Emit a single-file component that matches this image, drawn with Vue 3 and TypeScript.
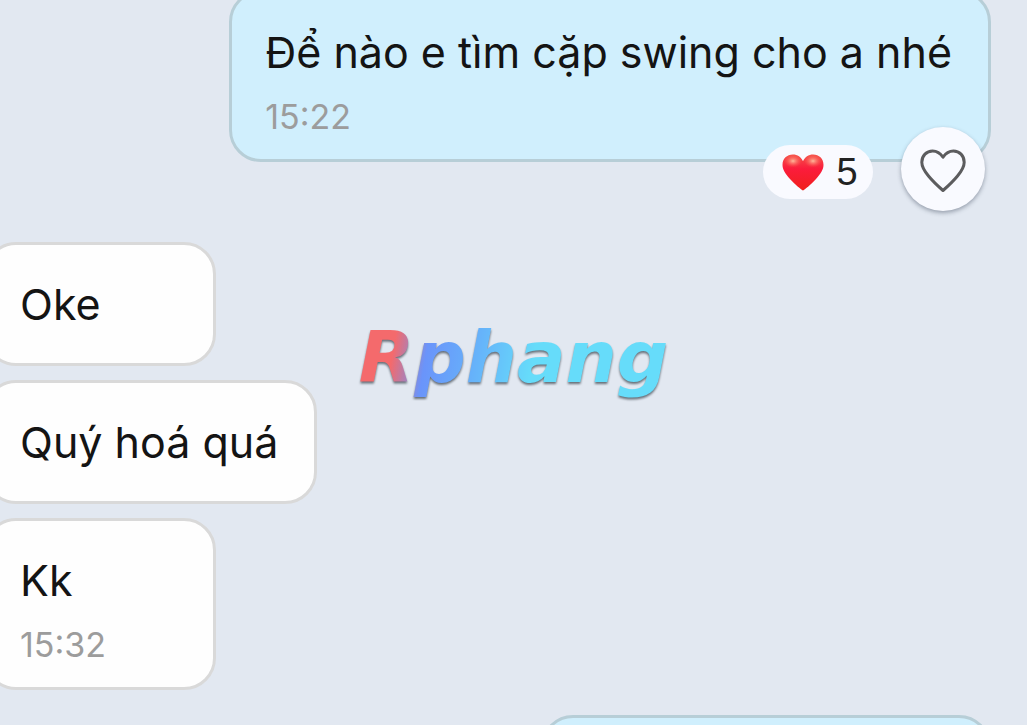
<script setup lang="ts">
import { ref } from 'vue'

interface Message {
  id: number
  text: string
  time?: string
}

const sent: Message = { id: 1, text: 'Để nào e tìm cặp swing cho a nhé', time: '15:22' }
const received: Message[] = [
  { id: 2, text: 'Oke' },
  { id: 3, text: 'Quý hoá quá' },
  { id: 4, text: 'Kk', time: '15:32' },
]
const reactions = ref(5)
</script>

<template>
  <main class="chat">
    <section class="group group-sent">
      <article class="bubble sent">
        <p class="text">{{ sent.text }}</p>
        <time class="time">{{ sent.time }}</time>
        <div class="actions">
          <div class="count">
            <svg class="heart" viewBox="0 0 42 37" aria-hidden="true">
              <defs>
                <linearGradient id="heartFill" x1="0" y1="0" x2="0" y2="1">
                  <stop offset="0" stop-color="#f4534a" />
                  <stop offset="0.4" stop-color="#fb1c3c" />
                  <stop offset="1" stop-color="#f0201c" />
                </linearGradient>
                <radialGradient id="heartShine">
                  <stop offset="0" stop-color="#ffc0a0" stop-opacity="0.95" />
                  <stop offset="1" stop-color="#ff5a50" stop-opacity="0" />
                </radialGradient>
              </defs>
              <path
                d="M21 36.500C19 35.500 13 30.500 8 25C3 19.500 .5 15.500 .5 10.800C.5 4.800 5 .6 10.800 .6C15.500 .6 19.200 3.200 21 7.200C22.800 3.200 26.500 .6 31.200 .6C37 .6 41.500 4.800 41.500 10.800C41.500 15.500 39 19.500 34 25C29 30.500 23 35.500 21 36.500Z"
                fill="url(#heartFill)"
              />
              <ellipse cx="11" cy="7" rx="9" ry="6.500" fill="url(#heartShine)" />
              <ellipse cx="31" cy="7" rx="9" ry="6.500" fill="url(#heartShine)" />
            </svg>
            <span>{{ reactions }}</span>
          </div>
          <button class="like" type="button" aria-label="Thả tim" @click="reactions++">
            <svg class="outline" viewBox="0 0 46 44" aria-hidden="true">
              <path
                d="M23 41.500C19 38 13 32.500 8.500 27C4.200 21.800 1.800 18 1.800 13.200C1.800 6.600 6.600 2 12.600 2C17 2 20.500 4.500 23 8.200C25.500 4.500 29 2 33.400 2C39.400 2 44.200 6.600 44.200 13.200C44.200 18 41.800 21.800 37.500 27C33 32.500 27 38 23 41.500Z"
                fill="none"
                stroke="#5c5c5e"
                stroke-width="3"
                stroke-linejoin="round"
              />
            </svg>
          </button>
        </div>
      </article>
    </section>

    <section class="group group-received">
      <article v-for="m in received" :key="m.id" class="bubble received">
        <p class="text">{{ m.text }}</p>
        <time v-if="m.time" class="time">{{ m.time }}</time>
      </article>
    </section>

    <section class="group group-sent">
      <article class="bubble sent next"></article>
    </section>

    <div class="watermark"><span class="brand">Rphang</span></div>
  </main>
</template>

<style>
body {
  margin: 0;
  background: #e2e8f1;
}
</style>

<style scoped>
.chat {
  position: relative;
  box-sizing: border-box;
  height: 100vh;
  overflow: hidden;
  display: flex;
  flex-direction: column;
  background: #e2e8f1;
  color: #141414;
  font-family: Inter, "Noto Sans", "Liberation Sans", sans-serif;
}

.group {
  display: flex;
  flex-direction: column;
  flex-shrink: 0;
  gap: 14px;
}

.group-sent {
  align-items: flex-end;
  margin-top: -10px;
  padding-right: 36px;
}

.group-received {
  align-items: flex-start;
  margin: 80px 0 0 -16px;
}

.group-received + .group-sent {
  margin-top: 25px;
}

.bubble {
  position: relative;
  box-sizing: border-box;
  min-width: 232px;
  padding: 32px 36px 32px 33px;
  border: 3px solid #d9d9d9;
  border-radius: 32px;
  background: #fefefe;
}

.bubble:has(.time) {
  padding-bottom: 22px;
}

.sent {
  border-color: #b7ced7;
  background: #d0effd;
}

.next {
  width: 450px;
  min-height: 124px;
}

.text {
  margin: 0;
  font-size: 43px;
  line-height: 54px;
  white-space: nowrap;
}

.time {
  display: block;
  margin-top: 18px;
  color: #9c9c9c;
  font-size: 34px;
  line-height: 40px;
}

.actions {
  position: absolute;
  right: 3px;
  bottom: -52px;
  display: flex;
  align-items: flex-end;
  gap: 28px;
}

.count {
  box-sizing: border-box;
  display: flex;
  align-items: center;
  justify-content: center;
  gap: 12px;
  width: 110px;
  height: 54px;
  margin-bottom: 12px;
  padding-left: 4px;
  border-radius: 27px;
  background: #f9faff;
  color: #222;
  font-family: "Liberation Sans", Arial, sans-serif;
  font-size: 38px;
  line-height: 54px;
}

.heart {
  width: 42px;
  height: 37px;
}

.like {
  display: grid;
  place-items: center;
  width: 84px;
  height: 84px;
  padding: 4px 0 0;
  border: 0;
  border-radius: 50%;
  background: #f9faff;
  box-shadow: 0 2px 4px rgba(60, 70, 90, 0.45);
  cursor: pointer;
}

.outline {
  width: 46px;
  height: 44px;
}

.watermark {
  position: absolute;
  inset: 0;
  display: grid;
  place-items: center;
  pointer-events: none;
}

.brand {
  margin-bottom: 12px;
  padding: 0 6px;
  background: linear-gradient(100deg, #f46a6c 14%, #6a94fa 24%, #66b0fa 38%, #66dcfa 56%);
  background-clip: text;
  -webkit-background-clip: text;
  color: transparent;
  filter: drop-shadow(0 2px 1px rgba(50, 60, 70, 0.7));
  font-family: "DejaVu Sans", sans-serif;
  font-size: 72px;
  font-style: italic;
  font-weight: 700;
  line-height: 96px;
}
</style>
